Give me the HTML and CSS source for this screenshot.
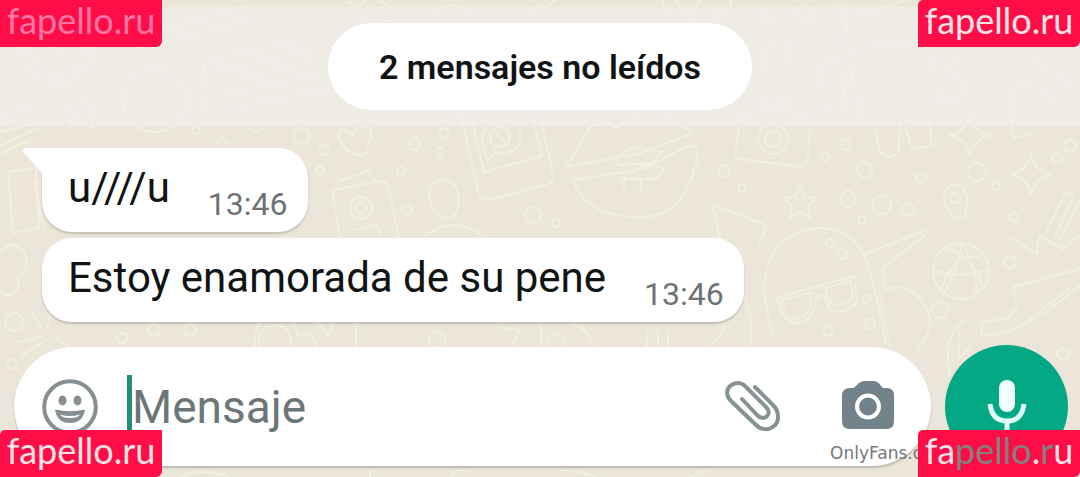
FILE: index.html
```html
<!DOCTYPE html>
<html lang="es">
<head>
<meta charset="utf-8">
<meta name="viewport" content="width=device-width, initial-scale=1">
<title>Chat</title>
<link rel="stylesheet" href="styles.css">
</head>
<body>
<div class="screen">
  <svg class="wallpaper" viewBox="0 0 1080 477" preserveAspectRatio="xMidYMid slice" aria-hidden="true">
    <defs>
      <g id="star"><path d="M0-17 5-6 17-5 8 3 11 16 0 9-11 16-8 3-17-5-5-6Z"/></g>
      <g id="spark"><path d="M0-20Q3-3 20 0 4 4 0 20-4 4-20 0-4-3 0-20Z"/></g>
      <g id="dots"><circle r="8"/><circle cx="22" cy="14" r="5"/><circle cx="-16" cy="20" r="4"/></g>
    </defs>
    <circle cx="57" cy="47" r="36"/><circle cx="57" cy="47" r="27"/><path d="M52 34v14l11 8"/>
    <circle cx="155" cy="100" r="32"/><use href="#star" x="82" y="112"/>
    <path d="M130 40 245 6M138 48 248 20M205 62 300 40M215 72 318 49M225 82 318 60M220 96 325 72M235 108 330 88M205 62l-5 30 12 34"/>
    <path d="M0 118 32 104M0 132 40 122M0 146 38 128M0 154 30 140M8 172l28-4 3 60-26 5ZM34 180l10 50"/>
    <use href="#dots" x="302" y="136"/><circle cx="256" cy="127" r="5"/><circle cx="196" cy="130" r="4"/><circle cx="320" cy="170" r="4"/><path d="M216 145l6-8 6 8"/>
    <path d="M340 140c-5-9 7-14 13-5 5-14 22-10 18 2l-6 18c-12 2-20-5-25-15"/>
    <path d="M332 190l50-9q6 1 7 8l10 50M332 190l8 49M338 182l30-11 8 10M355 230l22-6 4 12"/><circle cx="361" cy="208" r="11"/><circle cx="361" cy="208" r="5"/>
    <path d="M430 199q-4-16 12-19 14 0 16 15 2 20-9 23-16 1-19-19Z"/>
    <path d="M460 110l18 82q2 9 11 8l56-15q10-2 8-10l-13-60M470 112l14 60 58-16-11-42M487 160l-2-12q-8-15 5-24 14-7 25 1 10 9 2 23l-12 6-10-2Z"/><circle cx="500" cy="137" r="10"/><path d="M495 132l10 10"/>
    <path d="M567 167 590 127q18-8 25 1l38-20 40 25-52 20-74 14ZM573 180l70-11 45-23q15-3 7 20-12 53-60 51-51-2-62-37ZM615 157l18-10 30 5-11 11-34 2ZM620 179l25-15 20 4-9 11ZM624 176v15M641 178v13"/>
    <circle cx="414" cy="144" r="6"/><circle cx="440" cy="152" r="4"/><circle cx="401" cy="171" r="4"/><circle cx="407" cy="210" r="5"/><circle cx="533" cy="215" r="8"/><circle cx="556" cy="223" r="4"/><circle cx="444" cy="133" r="5"/>
    <path d="M348 0q10 12 17 0l10-3 17 12-2 12M430 20q20-30 48 0M532 20q0-20 16-12 10-17 20-8M662 0q10 38 48 18M675 0l15 22 10-22"/>
    <path d="M424 236q32-22 58 0"/>
    <circle cx="805" cy="14" r="9"/><circle cx="765" cy="18" r="6"/>
    <path d="M711 10h20v-10M834 5h12l2 45 75-10M850 18l62-20M768 66l-2-18q12-14 23-3l1 23M762 57v20M820 65l18-4 12 64M820 65l6 50M848 58l15 66M934 55l5 55M939 55l18 25M957 52l7 46-26 2M1020 50l52 35M1010 100q-2-15 18-14 20 2 25 17M1010 100l3 38 18-4"/>
    <path d="M740 115l-5 43 65 9q10-3 8-12l3-39-37-7ZM756 105l10-10 24 6v10"/><circle cx="773" cy="139" r="15"/><circle cx="773" cy="139" r="8"/>
    <path d="M876 129l3 22q12 12 20-1l1-29M904 124l8 25 20-3-3-28"/>
    <use href="#spark" x="970" y="135"/><use href="#spark" x="1031" y="174"/><use href="#star" x="800" y="203"/>
    <circle cx="865" cy="170" r="8"/><circle cx="845" cy="145" r="5"/><circle cx="825" cy="157" r="4"/><circle cx="724" cy="171" r="6"/><circle cx="742" cy="188" r="4"/><circle cx="848" cy="199" r="8"/><circle cx="882" cy="205" r="9"/><circle cx="908" cy="210" r="6"/><circle cx="921" cy="178" r="5"/><circle cx="977" cy="172" r="9"/><circle cx="996" cy="186" r="4"/><circle cx="1057" cy="158" r="5"/><circle cx="1070" cy="146" r="6"/><circle cx="1014" cy="217" r="4"/><circle cx="862" cy="220" r="4"/>
    <path d="M956 218q-15-13-12-25 6-13 18-6 9 10 2 31Z"/><circle cx="955" cy="198" r="5"/>
    <path d="M712 205l55 20-10 25M712 205l10 40M1045 235l20-42 9 2-20 45M1060 240l20-40"/>
    <path d="M774 340q-8-30-10-50 3-58 55-62 30 0 44 25 10 20 23 92M775 298l80-22 2 26q-12 14-28 7l-5-15-8 3q-1 22-18 26-16 0-19-21ZM782 300l28-7q4 22-13 26-13 0-15-19M826 288l25-7q6 21-11 24-13 1-14-17M863 255l62-25M885 290l-2-22 43-34M886 289q23-7 38 15 15 22-8 46M880 300l10 46"/>
    <circle cx="961" cy="271" r="28"/><path d="M944 248q35 10 38 42M962 243q-4 25-18 50M934 270q25 9 54 0M963 244q14 28 14 50M941 290q14-40 40-32"/>
    <path d="M1012 238l25 16 2-18 24 13 17-14M1080 269l-67 18 4 20-10 12-25 3v13q35 4 98-50M1015 330l55-42"/>
    <circle cx="1010" cy="262" r="6"/><circle cx="940" cy="310" r="8"/><circle cx="867" cy="299" r="4"/><circle cx="870" cy="324" r="5"/><circle cx="828" cy="331" r="5"/><circle cx="842" cy="254" r="5"/><circle cx="830" cy="243" r="4"/><circle cx="1063" cy="354" r="6"/>
    <path d="M950 375q-8-42 15-55M960 330l-2 30 12-13M740 290q15 20 10 55"/>
    <path d="M0 252q12-14 24 0 8 16-8 26 7 10-5 16-8 2-11-4M30 310l12 18M52 311l-5 18M18 342l25-6M20 357l23-15M55 338l14 8M255 347q-4-26 20-32 21 0 23 22 15-10 18 10M316 320l12 15 10-20M356 322v25"/>
    <circle cx="14" cy="322" r="9"/><circle cx="12" cy="364" r="5"/><circle cx="122" cy="338" r="5"/><circle cx="154" cy="330" r="6"/><circle cx="190" cy="330" r="6"/><circle cx="275" cy="341" r="16"/><circle cx="437" cy="340" r="8"/><circle cx="556" cy="342" r="8"/>
    <path d="M500 328l20 2-8 15M541 324v22M573 324q15 4 20 22M647 330v17M658 330v17M668 330v17M710 345q12-6 15-25M180 477q20-10 50 0M370 470v7M450 477q8-12 22-4M560 470q25 2 35 7M690 477l20-8"/>
  </svg>

  <header class="unread">
    <h1 class="pill">2 mensajes no leídos</h1>
  </header>

  <main class="thread">
    <article class="bubble bubble-first">
      <svg class="tail" viewBox="0 0 30 34" aria-hidden="true"><path d="M30 0H4Q-1 1 2 5L20 25V34H30Z"/></svg>
      <p>u////u</p><time>13:46</time>
    </article>
    <article class="bubble">
      <p>Estoy enamorada de su pene</p><time>13:46</time>
    </article>
  </main>

  <form class="composer">
    <div class="field">
      <button type="button" class="icon" aria-label="Emojis">
        <svg class="smile" viewBox="0 0 56 56"><circle cx="28" cy="28" r="25.8"/><ellipse cx="20.5" cy="21.5" rx="4" ry="5"/><ellipse cx="35.5" cy="21.5" rx="4" ry="5"/><path fill-rule="evenodd" d="M13 30.500Q28 34 43 30.500 41 44 28 44 15 44 13 30.500ZM18 35.500Q28 38.500 38 35.500 36 39 28 39 20 39 18 35.500Z"/></svg>
      </button>
      <span class="caret"></span>
      <input type="text" aria-label="Mensaje" placeholder="Mensaje">
      <button type="button" class="icon" aria-label="Adjuntar">
        <svg class="clip" viewBox="0 0 56 52"><path d="M30 6 48 24C55 31 54 41 49 45 43 50 36 49 30 43L6 20C1 15 1 9 5 5 10 1 16 1 20 5L41 26C45 30 44 34 41 36 38 38 35 37 32 34L17 18"/></svg>
      </button>
      <button type="button" class="icon camera-button" aria-label="Cámara">
        <svg class="camera" viewBox="0 0 52 50"><path class="body" d="M14 6Q18 1 23 1H31Q36 1 39 6L41 8H45Q52 8 52 16V41Q52 49 44 49H8Q0 49 0 41V16Q0 8 8 8H11Q13 7 14 6Z"/><circle class="lens" cx="26" cy="26.500" r="11"/></svg>
      </button>
    </div>
    <button type="button" class="mic" aria-label="Grabar mensaje de voz">
      <svg viewBox="0 0 40 62"><rect x="12" y="1" width="16" height="32" rx="8"/><path d="M3 25Q5 42 20 42T37 25M20 42V60"/></svg>
    </button>
  </form>

  <span class="watermark">OnlyFans.com</span>
  <span class="badge top left">fapello.ru</span>
  <span class="badge top right">fapello.ru</span>
  <span class="badge bottom left">fapello.ru</span>
  <span class="badge bottom right">fa<span class="tint">pello</span>.<span class="tint">r</span>u</span>
</div>
</body>
</html>
```
FILE: styles.css
```css
* { box-sizing: border-box; }

body {
  margin: 0;
  background: #ebe5da;
  color: #101414;
  font-family: Roboto, "Liberation Sans", sans-serif;
}

.screen {
  position: relative;
  min-height: 100vh;
  overflow: hidden;
  background: #ebe5da;
}

.wallpaper {
  position: absolute;
  inset: 0;
  width: 100%;
  height: 100%;
  fill: none;
  stroke: #f3eee2;
  stroke-width: 2;
  stroke-linejoin: round;
}

.unread {
  position: relative;
  display: flex;
  justify-content: center;
  padding: 16px 0;
  margin-top: 7px;
  background: rgba(241, 238, 236, 0.6);
}

.pill {
  margin: 0;
  padding: 24px 51px 23px;
  border-radius: 44px;
  background: #fff;
  font-size: 34px;
  line-height: 40px;
  font-weight: 600;
}

.thread {
  position: relative;
  display: flex;
  flex-direction: column;
  align-items: flex-start;
  gap: 6px;
  padding: 22px 42px 23px;
}

.bubble {
  position: relative;
  display: flex;
  align-items: flex-end;
  gap: 38px;
  padding: 15px 20px 9px 26px;
  border-radius: 30px;
  background: #fff;
  box-shadow: 0 2px 2px rgba(90, 80, 65, 0.25);
}

.bubble-first { border-top-left-radius: 0; }

.tail {
  position: absolute;
  top: 0;
  left: -20px;
  width: 30px;
  height: 34px;
  fill: #fff;
}

.bubble p {
  margin: 0;
  padding-bottom: 10px;
  font-size: 42px;
  line-height: 50px;
}

.bubble time {
  color: #6d7375;
  font-size: 32px;
  line-height: 38px;
}

.composer {
  position: relative;
  display: flex;
  align-items: center;
  gap: 14px;
  padding: 0 12px 0 14px;
}

.field {
  display: flex;
  flex: 1;
  align-items: center;
  min-width: 0;
  height: 119px;
  padding: 0 37px 0 28px;
  border-radius: 60px;
  background: #fff;
  box-shadow: 0 2px 2px rgba(90, 80, 65, 0.3);
}

button {
  padding: 0;
  border: 0;
  background: none;
}

.icon { display: flex; flex: none; }
.icon svg { display: block; }

.smile { width: 56px; height: 56px; fill: #869092; }
.smile circle { fill: none; stroke: #869092; stroke-width: 4; }

.caret {
  flex: none;
  width: 5px;
  height: 64px;
  margin-left: 29px;
  background: #209178;
}

.field input {
  flex: 1;
  min-width: 0;
  height: 60px;
  padding: 0;
  border: 0;
  outline: 0;
  background: none;
  color: #101414;
  font: 46px Roboto, "Liberation Sans", sans-serif;
}

.field input::placeholder { color: #6b7777; opacity: 1; }

.clip {
  width: 56px;
  height: 52px;
  fill: none;
  stroke: #879293;
  stroke-width: 4;
  stroke-linecap: round;
  stroke-linejoin: round;
}

.camera-button { margin: 0 0 4px 61px; }
.camera { width: 52px; height: 50px; }
.body { fill: #71828a; }
.lens { fill: none; stroke: #fff; stroke-width: 4; }

.mic {
  display: flex;
  flex: none;
  align-items: center;
  justify-content: center;
  width: 123px;
  height: 123px;
  border-radius: 50%;
  background: #04a884;
}

.mic svg {
  width: 40px;
  height: 62px;
  margin-top: 6px;
  fill: #effffb;
}

.mic path { fill: none; stroke: #e0fffa; stroke-width: 5; }

.watermark {
  position: absolute;
  right: 131px;
  bottom: 12px;
  color: #777;
  font: 17px/24px "DejaVu Sans", sans-serif;
}

.badge {
  position: absolute;
  width: 162px;
  height: 47px;
  background: #ff0d46;
  color: #ffe3e7;
  font: 36px/40px Lato, sans-serif;
  text-align: center;
}

.top { top: 0; }
.bottom { bottom: 0; }
.left { left: 0; }
.right { right: 0; }
.top.left { border-radius: 0 0 6px; color: #ff75a6; }
.top.right { border-radius: 5px 0 6px; }
.bottom.left { border-radius: 5px 0 6px; }
.bottom.right { border-radius: 5px 0 6px; }
.tint { color: #858080; }
```
